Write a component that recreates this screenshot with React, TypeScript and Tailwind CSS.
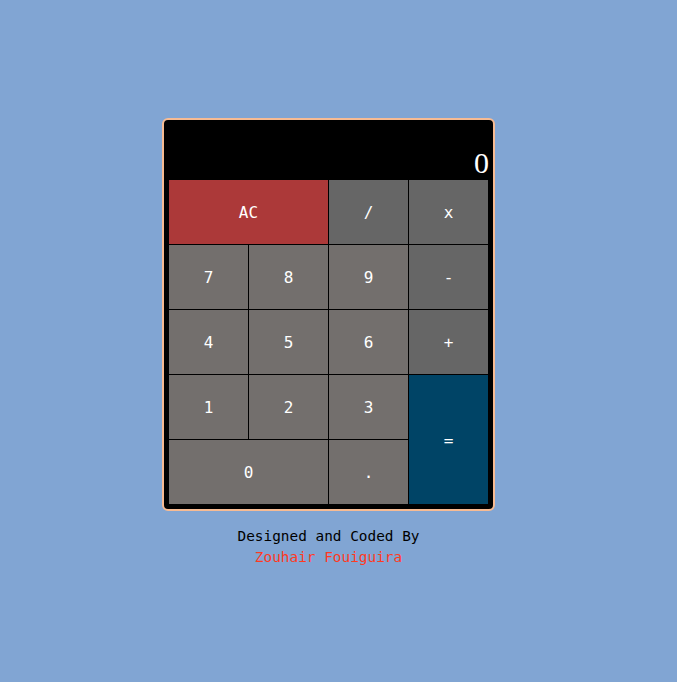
const keys: { label: string; cls: string }[] = [
  { label: 'AC', cls: 'col-span-2 bg-[#ac3939]' },
  { label: '/', cls: 'bg-[#666666]' },
  { label: 'x', cls: 'bg-[#666666]' },
  { label: '7', cls: 'bg-[#736f6d]' },
  { label: '8', cls: 'bg-[#736f6d]' },
  { label: '9', cls: 'bg-[#736f6d]' },
  { label: '-', cls: 'bg-[#666666]' },
  { label: '4', cls: 'bg-[#736f6d]' },
  { label: '5', cls: 'bg-[#736f6d]' },
  { label: '6', cls: 'bg-[#736f6d]' },
  { label: '+', cls: 'bg-[#666666]' },
  { label: '1', cls: 'bg-[#736f6d]' },
  { label: '2', cls: 'bg-[#736f6d]' },
  { label: '3', cls: 'bg-[#736f6d]' },
  { label: '=', cls: 'row-span-2 bg-[#004466]' },
  { label: '0', cls: 'col-span-2 bg-[#736f6d]' },
  { label: '.', cls: 'bg-[#736f6d]' },
];

export default function App() {
  return (
    <div className="flex min-h-screen flex-col items-center bg-[#81a5d3] pt-[118px] pr-[20px] [font-family:'DejaVu_Sans_Mono',monospace]">
      <div className="w-[333px] rounded-[6px] border-2 border-[#f7bb93] bg-black pb-[4px] pl-[5px] pr-[4px]">
        <div className="flex h-[60px] flex-col justify-end text-right">
          <div className="text-[30px] leading-[34px] text-white [font-family:'Liberation_Serif',serif]">0</div>
        </div>
        <div className="grid grid-cols-[repeat(4,80px)] grid-rows-[repeat(5,65px)]">
          {keys.map((k) => (
            <button
              key={k.label}
              className={`flex items-center justify-center border-r border-b border-black pt-[2px] text-[16px] text-white ${k.cls}`}
            >
              {k.label}
            </button>
          ))}
        </div>
      </div>
      <div className="mt-[15px] text-center text-[14.4px] leading-[21px]">
        <div className="text-black">Designed and Coded By</div>
        <div className="text-[#ff3a1f]">Zouhair Fouiguira</div>
      </div>
    </div>
  );
}
